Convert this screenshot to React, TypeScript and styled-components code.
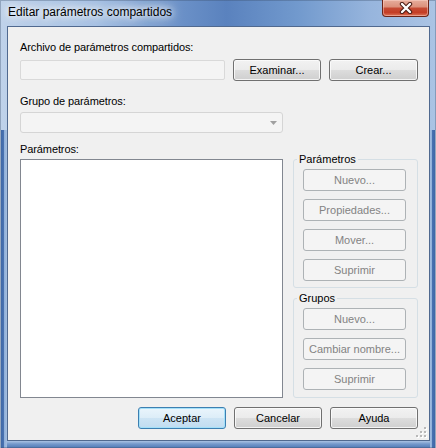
import React from 'react';
import styled, { createGlobalStyle, css } from 'styled-components';

const Global = createGlobalStyle`
  html, body { margin: 0; padding: 0; background: #fff; }
  body {
    width: 436px; height: 448px; overflow: hidden;
    font-family: "Liberation Sans", Arial, sans-serif;
  }
  * { box-sizing: border-box; }
`;

const Window = styled.div`
  width: 436px;
  height: 448px;
  display: flex;
  flex-direction: column;
  box-shadow: inset 0 0 0 1px rgba(60, 80, 110, 0.35);
  background:
    linear-gradient(90deg, #c6d6ea 0, #c6d6ea 1px, #3f68a8 1px, #4a73b1 4px, #8eaed8 4px, #a3bee1 7px) left 130px / 7px calc(100% - 130px) no-repeat,
    linear-gradient(270deg, #c6d6ea 0, #c6d6ea 1px, #3f68a8 1px, #4a73b1 4px, #8eaed8 4px, #a3bee1 6px) right 130px / 6px calc(100% - 130px) no-repeat,
    linear-gradient(180deg, #a9c2e3 0, #7398cb 3px, #4f79b5 7px) left bottom / 100% 7px no-repeat,
    linear-gradient(90deg, #bfd2ea 0%, #a6c1e3 22%, #6a90c7 42%, #5a82be 52%, #7199cd 68%, #97b5dd 85%, #abc4e4 100%);
`;

const TitleBar = styled.div`
  height: 26px;
  display: flex;
  align-items: flex-start;
  justify-content: space-between;
  padding: 0 7px 0 8px;
`;

const TitleText = styled.span`
  margin-top: 5px;
  font-size: 12px;
  line-height: 15px;
  color: #000;
  text-shadow: 0 0 6px #fff, 0 0 10px #fff, 0 0 14px rgba(255, 255, 255, 0.9);
`;

const CloseButton = styled.div`
  width: 47px;
  height: 17px;
  display: flex;
  align-items: center;
  justify-content: center;
  border: 1px solid #6b2418;
  border-top: none;
  border-radius: 0 0 4px 4px;
  background: linear-gradient(180deg, #e6ad9c 0%, #dc917c 42%, #c54a33 52%, #c43d25 78%, #dc7458 100%);
  box-shadow: inset 0 0 0 1px rgba(255, 220, 210, 0.45);
`;

const Client = styled.div`
  position: relative;
  flex: 1;
  margin: 0 6px 7px 7px;
  border: 1px solid #50698f;
  background: #f0f0f0;
  padding: 13px 11px 11px 12px;
  display: flex;
  flex-direction: column;
`;

const Label = styled.div<{ $mt?: number }>`
  font-size: 11px;
  line-height: 15px;
  color: #000;
  letter-spacing: -0.1px;
  margin-top: ${(p) => p.$mt ?? 0}px;
`;

const Row = styled.div`
  display: flex;
  align-items: center;
  height: 22px;
  margin-top: 4px;
  gap: 8px;
`;

const TextField = styled.input`
  width: 205px;
  height: 20px;
  margin: 0;
  padding: 0 3px;
  border: 1px solid #d9d9d9;
  border-radius: 2px;
  background: #f4f4f4;
  font: inherit;
  outline: none;
`;

const buttonKinds = {
  normal: css`
    color: #000;
    border-color: #707070;
    background: linear-gradient(180deg, #f2f2f2 0%, #ebebeb 50%, #dddddd 51%, #cfcfcf 100%);
    box-shadow: inset 0 0 0 1px rgba(252, 252, 252, 0.8);
  `,
  primary: css`
    color: #000;
    border-color: #3c7fb1;
    background: linear-gradient(180deg, #eaf5fc 0%, #dcedf8 50%, #cde4f4 51%, #c1dcf0 100%);
    box-shadow: inset 0 0 0 1px #a4e0f9;
  `,
  disabled: css`
    color: #838383;
    border-color: #adb2b5;
    background: #f4f4f4;
    box-shadow: none;
  `,
};

const Button = styled.button<{ $kind?: keyof typeof buttonKinds; $w?: number; $grow?: boolean }>`
  width: ${(p) => (p.$w ? `${p.$w}px` : 'auto')};
  flex: ${(p) => (p.$grow ? 1 : 'none')};
  height: 22px;
  margin: 0;
  padding: 0;
  border: 1px solid;
  border-radius: 3px;
  font-family: "Liberation Sans", Arial, sans-serif;
  font-size: 11px;
  line-height: 18px;
  text-align: center;
  ${(p) => buttonKinds[p.$kind ?? 'normal']}
`;

const Combo = styled.div`
  margin-top: 3px;
  width: 263px;
  height: 21px;
  border: 1px solid #d5d5d5;
  border-radius: 3px;
  background: #f4f4f4;
  display: flex;
  align-items: center;
  justify-content: flex-end;
  padding-right: 5px;
`;

const Middle = styled.div`
  margin-top: 9px;
  flex: 1;
  min-height: 0;
  display: grid;
  grid-template-columns: 263px 125px;
  column-gap: 10px;
`;

const LeftCol = styled.div`
  display: flex;
  flex-direction: column;
  min-height: 0;
`;

const ListBox = styled.div`
  margin-top: 2px;
  flex: 1;
  border: 1px solid #828790;
  background: #fff;
`;

const RightCol = styled.div`
  padding-top: 10px;
  display: flex;
  flex-direction: column;
  gap: 3px;
`;

const GroupBox = styled.fieldset<{ $pb: number }>`
  margin: 0;
  min-width: 0;
  padding: 2px 11px ${(p) => p.$pb}px 9px;
  border: 1px solid #d5dfe5;
  border-radius: 3px;
`;

const Legend = styled.legend`
  margin-left: -6px;
  padding: 0 2px;
  font-size: 11px;
  line-height: 15px;
  color: #000;
`;

const ButtonStack = styled.div`
  display: flex;
  flex-direction: column;
  gap: 8px;
`;

const Footer = styled.div`
  margin-top: 9px;
  display: flex;
  justify-content: flex-end;
  gap: 8px;
`;

const Grip = styled.svg`
  position: absolute;
  right: 2px;
  bottom: 2px;
`;

const CloseGlyph = () => (
  <svg width="14" height="12" viewBox="0 0 14 12">
    <path d="M3 2 L11 10 M11 2 L3 10" stroke="#4a1c14" strokeWidth="4.4" strokeLinecap="round" />
    <path d="M3 2 L11 10 M11 2 L3 10" stroke="#ffffff" strokeWidth="2.4" strokeLinecap="round" />
  </svg>
);

const ComboArrow = () => (
  <svg width="7" height="4" viewBox="0 0 7 4">
    <path d="M0 0 H7 L3.5 4 Z" fill="#a0a0a0" />
  </svg>
);

const GripDots = () => {
  const pts: [number, number][] = [
    [8, 0],
    [4, 4],
    [8, 4],
    [0, 8],
    [4, 8],
    [8, 8],
  ];
  return (
    <Grip width="11" height="11" viewBox="0 0 11 11">
      {pts.map(([x, y]) => (
        <g key={`${x}-${y}`}>
          <rect x={x + 1} y={y + 1} width="2" height="2" fill="#ffffff" />
          <rect x={x} y={y} width="2" height="2" fill="#b8b8b8" />
        </g>
      ))}
    </Grip>
  );
};

export default function App() {
  return (
    <>
      <Global />
      <Window>
        <TitleBar>
          <TitleText>Editar parámetros compartidos</TitleText>
          <CloseButton>
            <CloseGlyph />
          </CloseButton>
        </TitleBar>
        <Client>
          <Label>Archivo de parámetros compartidos:</Label>
          <Row>
            <TextField disabled />
            <Button $w={88}>Examinar...</Button>
            <Button $grow>Crear...</Button>
          </Row>
          <Label $mt={13}>Grupo de parámetros:</Label>
          <Combo>
            <ComboArrow />
          </Combo>
          <Middle>
            <LeftCol>
              <Label>Parámetros:</Label>
              <ListBox />
            </LeftCol>
            <RightCol>
              <GroupBox $pb={6}>
                <Legend>Parámetros</Legend>
                <ButtonStack>
                  <Button $kind="disabled">Nuevo...</Button>
                  <Button $kind="disabled">Propiedades...</Button>
                  <Button $kind="disabled">Mover...</Button>
                  <Button $kind="disabled">Suprimir</Button>
                </ButtonStack>
              </GroupBox>
              <GroupBox $pb={7}>
                <Legend>Grupos</Legend>
                <ButtonStack>
                  <Button $kind="disabled">Nuevo...</Button>
                  <Button $kind="disabled">Cambiar nombre...</Button>
                  <Button $kind="disabled">Suprimir</Button>
                </ButtonStack>
              </GroupBox>
            </RightCol>
          </Middle>
          <Footer>
            <Button $kind="primary" $w={88}>Aceptar</Button>
            <Button $w={88}>Cancelar</Button>
            <Button $w={88}>Ayuda</Button>
          </Footer>
          <GripDots />
        </Client>
      </Window>
    </>
  );
}
